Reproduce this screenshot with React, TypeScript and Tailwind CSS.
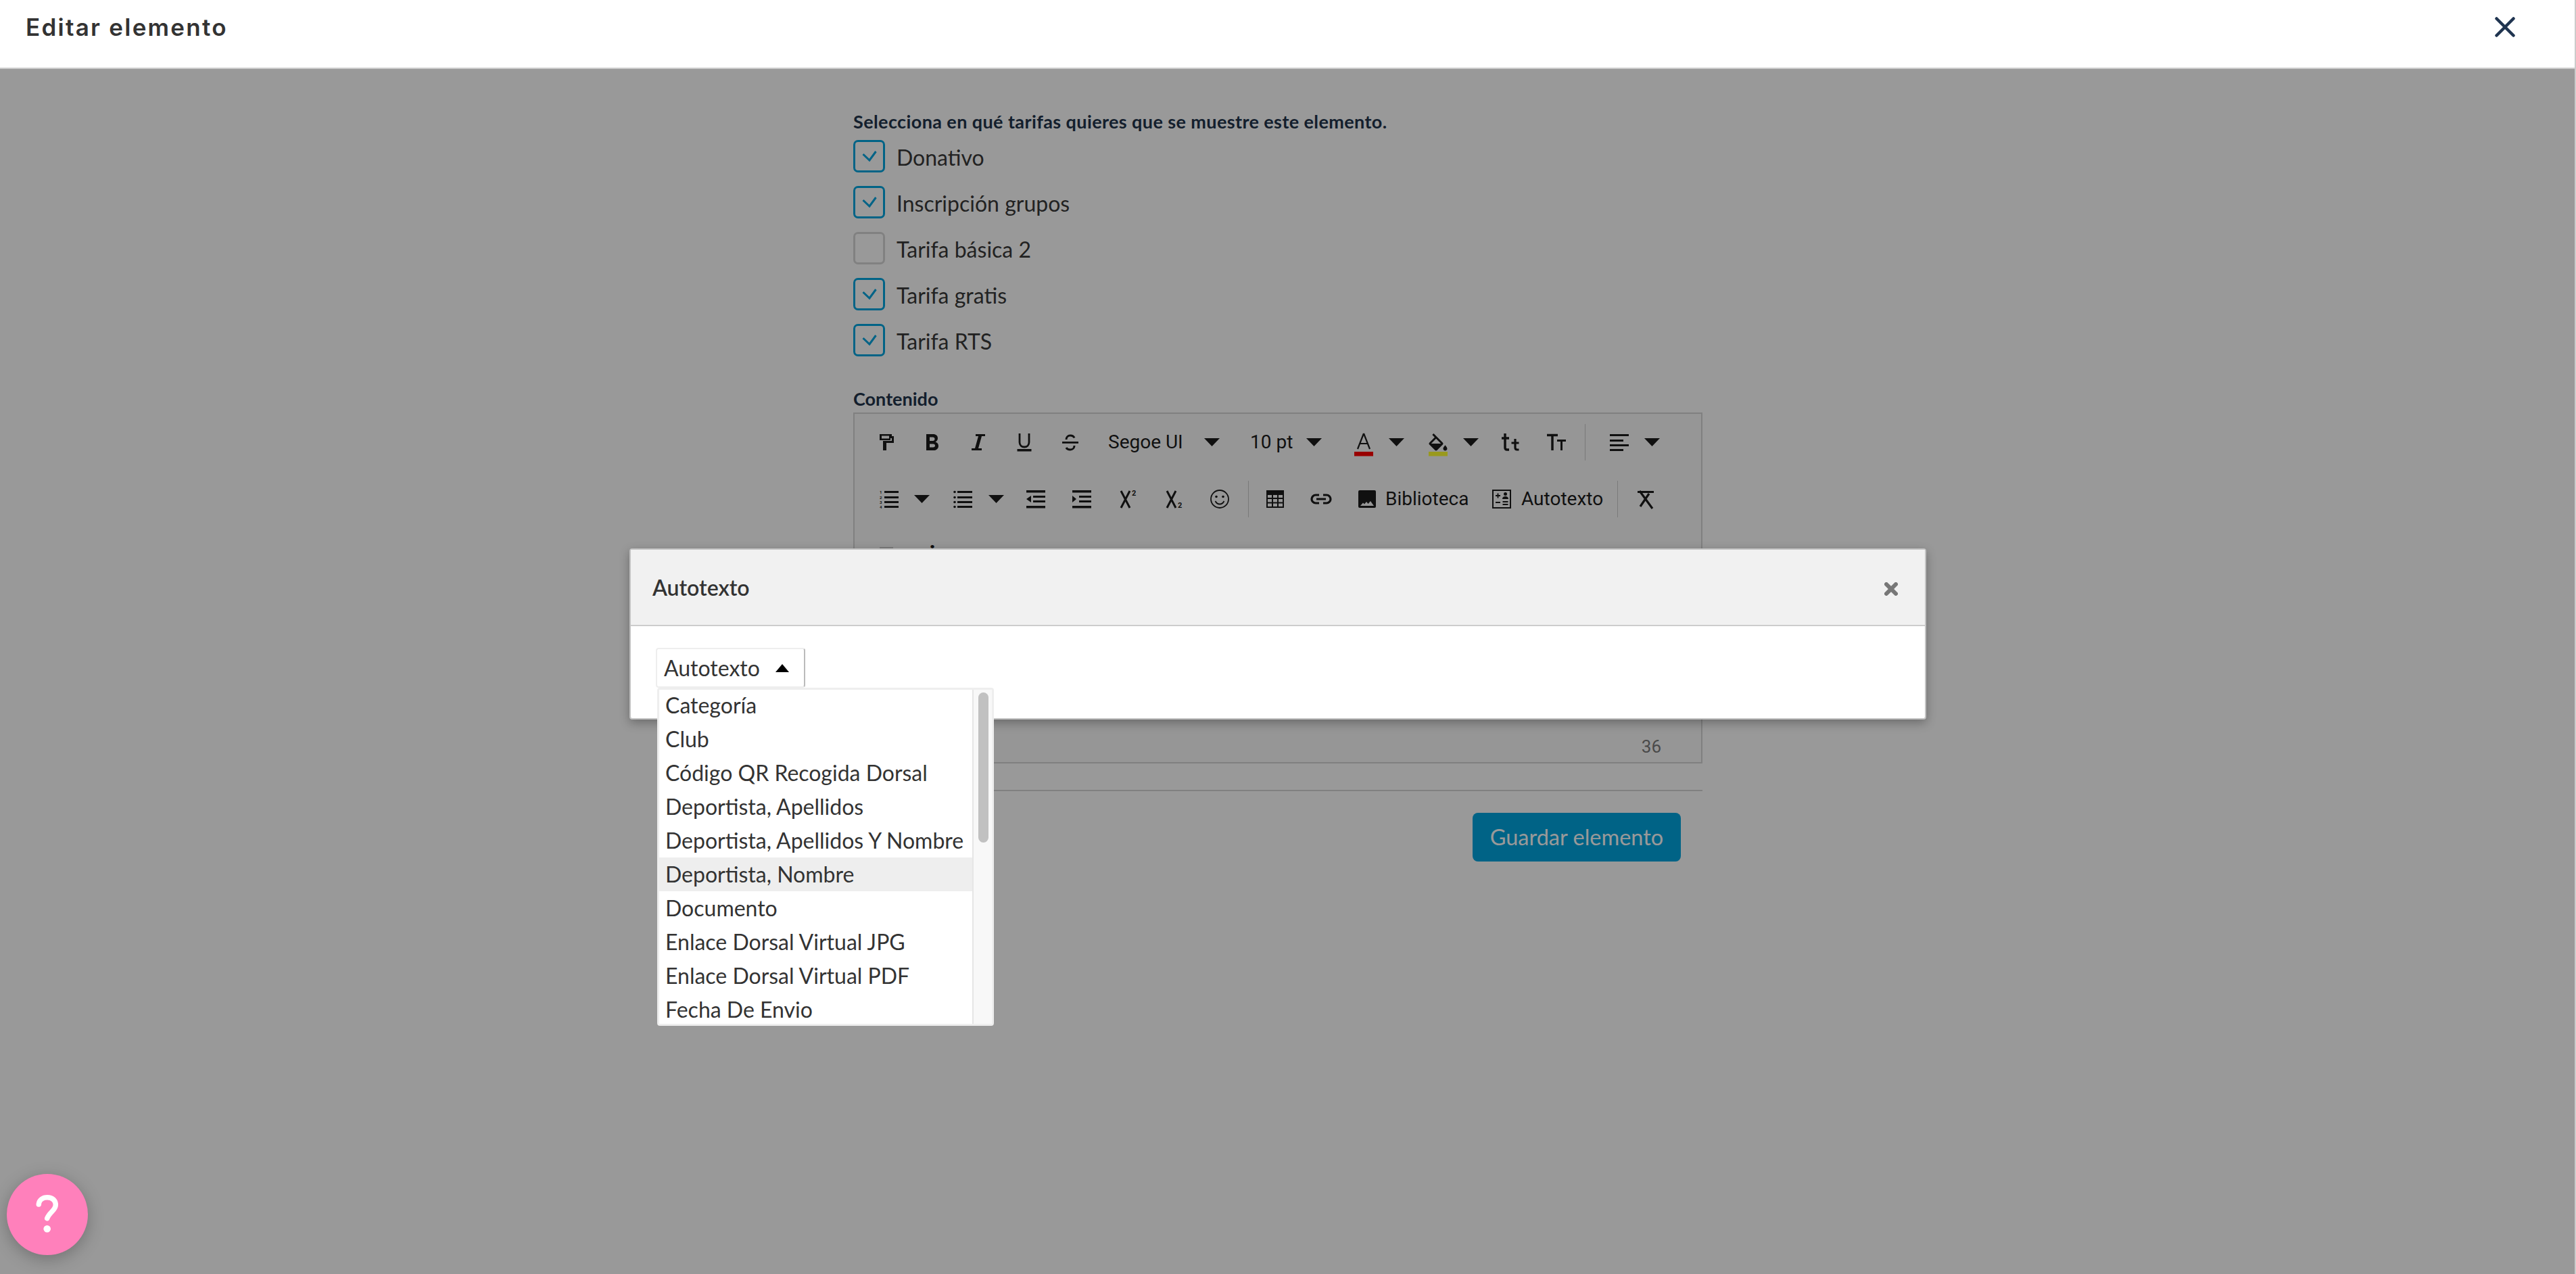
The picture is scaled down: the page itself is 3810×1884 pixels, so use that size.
import React from 'react';

const Ico = ({ children }: { children: React.ReactNode }) => (
  <svg viewBox="0 0 32 32" className="w-8 h-8 overflow-visible" fill="currentColor">
    {children}
  </svg>
);

const Btn = ({ children }: { children: React.ReactNode }) => (
  <div className="w-[68px] h-full flex items-center justify-center shrink-0">{children}</div>
);

const Caret = ({ up }: { up?: boolean }) => (
  <svg viewBox="0 0 23 12" className="w-[23px] h-3 shrink-0" fill="currentColor">
    <polygon points={up ? '11.5,0 23,12 0,12' : '0,0 23,0 11.5,12'} />
  </svg>
);

const CaretBtn = () => (
  <div className="w-7 h-full flex items-center justify-center shrink-0"><Caret /></div>
);

const Sep = ({ className }: { className: string }) => (
  <div className={`w-px h-[54px] bg-[#ccc] shrink-0 ${className}`} />
);

const PaintIcon = () => (
  <Ico>
    <path fillRule="evenodd" d="M6 4h18v3h3v10H16v11h-5V14h13V10h-2v3H6zM9 6.500V10.500h11V6.500z" />
  </Ico>
);
const BoldIcon = () => (
  <Ico>
    <path fillRule="evenodd" d="M7 4h10c4.500 0 7 2.500 7 6 0 2.500-1.200 4.500-3.500 5.400 3 .8 4.500 3.200 4.500 6 0 4-3 6.600-7.500 6.600H7zM12 8.500V14h4.500c2 0 3-1.200 3-2.800s-1-2.700-3-2.700zM12 18.500v5h5c2 0 3-1 3-2.500s-1-2.500-3-2.500z" />
  </Ico>
);
const ItalicIcon = () => (
  <Ico>
    <path d="M12 4h14v3h-5l-5 18h5v3H6v-3h5l5-18h-4z" />
  </Ico>
);
const UnderlineIcon = () => (
  <Ico>
    <path d="M9 3v13c0 4.500 3 7 7 7s7-2.500 7-7V3" fill="none" stroke="currentColor" strokeWidth="2.800" />
    <rect x="5.500" y="26" width="21" height="3.500" />
  </Ico>
);
const StrikeIcon = () => (
  <Ico>
    <rect x="4" y="15" width="24" height="2.800" />
    <path d="M10 12c0-3.500 2.500-6 6-6 3 0 5 1.200 6 3.500M22 21c0 3.500-2.500 6-6 6-3 0-5-1-6-3" fill="none" stroke="currentColor" strokeWidth="3" />
  </Ico>
);
const TextColorIcon = () => (
  <Ico>
    <path d="M16 3 7 26M16 3l9 23M10 18h12" fill="none" stroke="currentColor" strokeWidth="2.200" />
    <rect x="2" y="30" width="28" height="6.500" fill="#ff0000" />
  </Ico>
);
const FillIcon = () => (
  <Ico>
    <path
      transform="translate(-2 3) scale(1.5)"
      d="M16.560 8.940L7.620 0 6.210 1.410l2.380 2.380-5.150 5.150c-.59.59-.59 1.540 0 2.120l5.500 5.500c.29.29.68.44 1.060.44s.77-.15 1.060-.44l5.500-5.500c.59-.58.59-1.530 0-2.120zM5.210 10L10 5.210 14.790 10H5.210zM19 11.500s-2 2.170-2 3.500c0 1.100.9 2 2 2s2-.9 2-2c0-1.330-2-3.500-2-3.500z"
    />
    <rect x="2" y="30" width="28" height="6.500" fill="#ffff33" />
  </Ico>
);
const SmallTIcon = () => (
  <Ico>
    <path d="M8 3v21c0 2 1 3 3 3h3M3 10h11" fill="none" stroke="currentColor" strokeWidth="3.500" />
    <path d="M23 11v13c0 1.600.8 3 3 3h2.500M17.500 17h11" fill="none" stroke="currentColor" strokeWidth="3.200" />
  </Ico>
);
const CapsTIcon = () => (
  <Ico>
    <path d="M2 5.500h16M10 4v24" fill="none" stroke="currentColor" strokeWidth="3.500" />
    <path d="M17 13.500h13M23.500 13v15" fill="none" stroke="currentColor" strokeWidth="3" />
  </Ico>
);
const AlignIcon = () => (
  <Ico>
    <rect x="2" y="4" width="28" height="3" />
    <rect x="2" y="12" width="20" height="3" />
    <rect x="2" y="19" width="28" height="3" />
    <rect x="2" y="26" width="20" height="3" />
  </Ico>
);
const OlIcon = () => (
  <Ico>
    {[4, 12, 19, 26].map((y, i) => (
      <g key={y}>
        <rect x="9" y={y} width="21" height="3" />
        <text x="2" y={y + 4} fontSize="6" fontFamily="Roboto, sans-serif" fontWeight="700">{i + 1}</text>
      </g>
    ))}
  </Ico>
);
const UlIcon = () => (
  <Ico>
    {[4, 12, 19, 26].map((y) => (
      <g key={y}>
        <rect x="7" y={y} width="22" height="3" />
        <circle cx="3" cy={y + 1.500} r="1.800" />
      </g>
    ))}
  </Ico>
);
const OutdentIcon = () => (
  <Ico>
    <rect x="2" y="3" width="28" height="3.500" />
    <rect x="12" y="11" width="18" height="3" />
    <rect x="12" y="18" width="18" height="3" />
    <rect x="2" y="26" width="28" height="3.500" />
    <polygon points="9,11 9,21 2,16" />
  </Ico>
);
const IndentIcon = () => (
  <Ico>
    <rect x="2" y="3" width="28" height="3.500" />
    <rect x="12" y="11" width="18" height="3" />
    <rect x="12" y="18" width="18" height="3" />
    <rect x="2" y="26" width="28" height="3.500" />
    <polygon points="2,11 2,21 8,16" />
  </Ico>
);
const SupIcon = () => (
  <Ico>
    <path d="M6 4l13 25M19 4 6 29" fill="none" stroke="currentColor" strokeWidth="3" />
    <text x="22" y="11" fontSize="11" fontFamily="Roboto, sans-serif" fontWeight="700">2</text>
  </Ico>
);
const SubIcon = () => (
  <Ico>
    <path d="M6 4l13 25M19 4 6 29" fill="none" stroke="currentColor" strokeWidth="3" />
    <text x="22" y="29" fontSize="11" fontFamily="Roboto, sans-serif" fontWeight="700">2</text>
  </Ico>
);
const SmileIcon = () => (
  <Ico>
    <circle cx="16" cy="16" r="13" fill="none" stroke="currentColor" strokeWidth="1.800" />
    <circle cx="11" cy="12.500" r="1.800" />
    <circle cx="21" cy="12.500" r="1.800" />
    <path d="M9.500 19c1.500 3 3.800 4.500 6.500 4.500s5-1.500 6.500-4.500" fill="none" stroke="currentColor" strokeWidth="1.800" />
  </Ico>
);
const TableIcon = () => (
  <Ico>
    <rect x="3" y="3" width="26" height="7" />
    <path d="M4 4h24v24H4zM4 15h24M4 21.500h24M12 9v19M20 9v19" fill="none" stroke="currentColor" strokeWidth="2" />
  </Ico>
);
const LinkIcon = () => (
  <Ico>
    <path d="M13 10H8a6 6 0 0 0 0 12h5M19 10h5a6 6 0 0 1 0 12h-5M9 16h14" fill="none" stroke="currentColor" strokeWidth="3.200" />
  </Ico>
);
const ImageIcon = () => (
  <svg viewBox="0 0 26 26" className="w-[26px] h-[26px] shrink-0" fill="currentColor">
    <path fillRule="evenodd" d="M2 0h22a2 2 0 0 1 2 2v22a2 2 0 0 1-2 2H2a2 2 0 0 1-2-2V2a2 2 0 0 1 2-2zM3 23h20l-5-7-3.500 4-2.500-3-3 3.500-2-2z" />
  </svg>
);
const AutotextIcon = () => (
  <svg viewBox="0 0 28 28" className="w-7 h-7 shrink-0" fill="currentColor">
    <rect x="1" y="1" width="26" height="26" fill="none" stroke="currentColor" strokeWidth="2" />
    <path d="M5 9h7M8.500 5.500v7M5 19h7" fill="none" stroke="currentColor" strokeWidth="1.800" />
    <circle cx="19.500" cy="6.500" r="2.500" />
    <path d="M15 14c0-3 2-4 4.500-4s4.500 1 4.500 4zM15.500 17h8v2h-8zM15.500 21h8v2h-8z" />
  </svg>
);
const ClearIcon = () => (
  <Ico>
    <path d="M4 5.500h24M7 4l19 26M21 8 8 27" fill="none" stroke="currentColor" strokeWidth="3.200" />
  </Ico>
);

const tarifas = [
  { name: 'Donativo', on: true },
  { name: 'Inscripción grupos', on: true },
  { name: 'Tarifa básica 2', on: false },
  { name: 'Tarifa gratis', on: true },
  { name: 'Tarifa RTS', on: true },
];

const autotextos = [
  'Categoría',
  'Club',
  'Código QR Recogida Dorsal',
  'Deportista, Apellidos',
  'Deportista, Apellidos Y Nombre',
  'Deportista, Nombre',
  'Documento',
  'Enlace Dorsal Virtual JPG',
  'Enlace Dorsal Virtual PDF',
  'Fecha De Envio',
];

const Toolbar = () => (
  <div className="text-[#1c1c1c] font-['Roboto',sans-serif] text-[28px]">
    <div className="h-[83px] flex items-center pl-[13px]">
      <Btn><PaintIcon /></Btn>
      <Btn><BoldIcon /></Btn>
      <Btn><ItalicIcon /></Btn>
      <Btn><UnderlineIcon /></Btn>
      <Btn><StrikeIcon /></Btn>
      <div className="w-[210px] h-full flex items-center pl-[22px] shrink-0">
        <span className="w-[142px]">Segoe UI</span>
        <Caret />
      </div>
      <div className="w-[151px] h-full flex items-center pl-[22px] shrink-0">
        <span className="w-[83px]">10 pt</span>
        <Caret />
      </div>
      <div className="ml-[5px]" />
      <Btn><TextColorIcon /></Btn>
      <CaretBtn />
      <div className="ml-[14px]" />
      <Btn><FillIcon /></Btn>
      <CaretBtn />
      <div className="ml-[11px]" />
      <Btn><SmallTIcon /></Btn>
      <Btn><CapsTIcon /></Btn>
      <Sep className="ml-2 mr-4" />
      <Btn><AlignIcon /></Btn>
      <CaretBtn />
    </div>
    <div className="h-[85px] flex items-center pl-[17px]">
      <Btn><OlIcon /></Btn>
      <CaretBtn />
      <div className="ml-[14px]" />
      <Btn><UlIcon /></Btn>
      <CaretBtn />
      <div className="ml-[11px]" />
      <Btn><OutdentIcon /></Btn>
      <Btn><IndentIcon /></Btn>
      <Btn><SupIcon /></Btn>
      <Btn><SubIcon /></Btn>
      <Btn><SmileIcon /></Btn>
      <Sep className="ml-2 mr-[5px]" />
      <Btn><TableIcon /></Btn>
      <Btn><LinkIcon /></Btn>
      <div className="w-[199px] h-full flex items-center pl-[21px] gap-[14px] shrink-0">
        <ImageIcon />
        <span>Biblioteca</span>
      </div>
      <div className="w-[197px] h-full flex items-center pl-5 gap-[15px] shrink-0">
        <AutotextIcon />
        <span>Autotexto</span>
      </div>
      <Sep className="ml-2 mr-[7px]" />
      <Btn><ClearIcon /></Btn>
    </div>
    <div className="h-[85px] flex items-center pl-[13px]">
      <Btn><div className="w-5 h-7 border-2 border-[#ccc]" /></Btn>
      <Btn><span className="font-bold text-[34px] -mt-[6px]">i</span></Btn>
    </div>
  </div>
);

const Form = () => (
  <div className="flex justify-center pr-7 pt-[68px]">
    <div className="w-[1256px] font-['Lato',sans-serif]">
      <p className="text-[27px] font-bold text-[#22344c] leading-[20px] tracking-[0.4px]">
        Selecciona en qué tarifas quieres que se muestre este elemento.
      </p>
      <div className="mt-[17px] flex flex-col gap-5">
        {tarifas.map((t) => (
          <div key={t.name} className="flex items-center gap-[17px] h-12">
            <div
              className={`w-[47px] h-12 rounded-[7px] border-[3px] flex items-center justify-center ${
                t.on ? 'border-[#00a5e0]' : 'border-[#d8d8d8]'
              }`}
            >
              {t.on && (
                <svg viewBox="0 0 22 16" className="w-[22px] h-4" fill="none" stroke="#00a5e0" strokeWidth="3">
                  <path d="M1.500 5l9.500 9L20.500 1" />
                </svg>
              )}
            </div>
            <span className="text-[32px] text-[#3a3a3a] pt-[3px]">{t.name}</span>
          </div>
        ))}
      </div>
      <p className="mt-[53px] text-[27px] font-bold text-[#22344c] leading-[20px]">Contenido</p>
      <div className="mt-[10px] h-[519px] border-2 border-[#d5d5d5] bg-[#fbfbfb] flex flex-col">
        <Toolbar />
        <div className="mt-auto pr-[59px] pb-[7px] text-right text-[26px] text-[#7c7c7c] font-['Roboto',sans-serif] leading-[32px]">
          36
        </div>
      </div>
      <div className="mt-[39px] border-t-2 border-[#d5d5d5]" />
      <div className="mt-8 flex justify-end pr-8">
        <div className="w-[308px] h-[72px] rounded-[8px] bg-[#00a5e0] text-white text-[32.500px] flex items-center justify-center">
          Guardar elemento
        </div>
      </div>
    </div>
  </div>
);

const AutotextoModal = () => (
  <div className="absolute inset-x-0 top-[811px] z-30 flex justify-center pr-7 font-['Lato',sans-serif]">
    <div className="w-[1918px] bg-white border-2 border-[#c4c4c4] rounded-[4px] shadow-[0_5px_15px_rgba(0,0,0,0.3)]">
      <div className="h-[113px] bg-[#f1f1f1] border-b-2 border-[#ccc] flex items-center justify-between pl-8 pr-10">
        <h3 className="text-[32px] font-semibold text-[#333]">Autotexto</h3>
        <svg viewBox="0 0 20 20" className="w-5 h-5 mt-[5px]" fill="none" stroke="#777" strokeWidth="6" strokeLinecap="round">
          <path d="M3 3l14 14M17 3 3 17" />
        </svg>
      </div>
      <div className="pl-[37px] pt-8 pb-[45px]">
        <div className="relative w-[221px]">
          <div className="h-[59px] border-2 border-[#eee] border-r-[#bbb] rounded-[4px] flex items-center pl-[10px] text-[32px] text-[#333]">
            <span className="w-[165px]">Autotexto</span>
            <svg viewBox="0 0 20 12" className="w-5 h-3" fill="#000">
              <polygon points="10,0 20,12 0,12" />
            </svg>
          </div>
          <div className="absolute top-full left-[2px] w-[498px] h-[500px] bg-white border-[3px] border-[#eee] rounded-[4px] flex overflow-hidden">
            <div className="w-[463px] shrink-0 -mt-[2px]">
              {autotextos.map((a, i) => (
                <div
                  key={a}
                  className={`h-[50px] pl-[9px] flex items-center text-[32px] text-[#333] whitespace-nowrap ${
                    i === 5 ? 'bg-[#eee]' : ''
                  }`}
                >
                  {a}
                </div>
              ))}
            </div>
            <div className="flex-1 bg-[#f8f8f8] border-l-2 border-[#e6e6e6] pt-[4px] pl-[7px]">
              <div className="w-[15px] h-[222px] bg-[#c1c1c1] rounded-[8px]" />
            </div>
          </div>
        </div>
      </div>
    </div>
  </div>
);

export default function App() {
  return (
    <div className="relative w-screen h-screen overflow-hidden bg-white border-r-2 border-[#ccc]">
      <header className="relative z-20 h-[102px] bg-white border-b-2 border-[#ccc] flex items-start justify-between pt-[18px] pl-[38px] pr-[88px]">
        <h1 className="font-['Inter',sans-serif] text-[35px] leading-[44px] font-semibold text-[#333] tracking-[2.250px]">
          Editar elemento
        </h1>
        <svg viewBox="0 0 30 30" className="w-[30px] h-[30px] mt-[7px]" fill="none" stroke="#1f3450" strokeWidth="4.500" strokeLinecap="round">
          <path d="M2.500 2.500l25 25M27.500 2.500l-25 25" />
        </svg>
      </header>
      <Form />
      <div className="absolute inset-0 z-10 bg-black/40" />
      <AutotextoModal />
      <div className="absolute left-[10px] bottom-7 z-30 w-[120px] h-[120px] rounded-full bg-[#ff80bb] shadow-[0_6px_24px_rgba(0,0,0,0.25)]">
        <svg viewBox="0 0 120 120" className="w-full h-full" fill="none" stroke="#fff" strokeWidth="7.500" strokeLinecap="round">
          <path d="M47.300 45c.5-6.500 6-10.300 12.700-10.300 7.500 0 12.300 4.800 12.300 11 0 8-9.500 11.300-12.600 20" />
          <circle cx="59.700" cy="81.300" r="5.300" fill="#fff" stroke="none" />
        </svg>
      </div>
    </div>
  );
}
